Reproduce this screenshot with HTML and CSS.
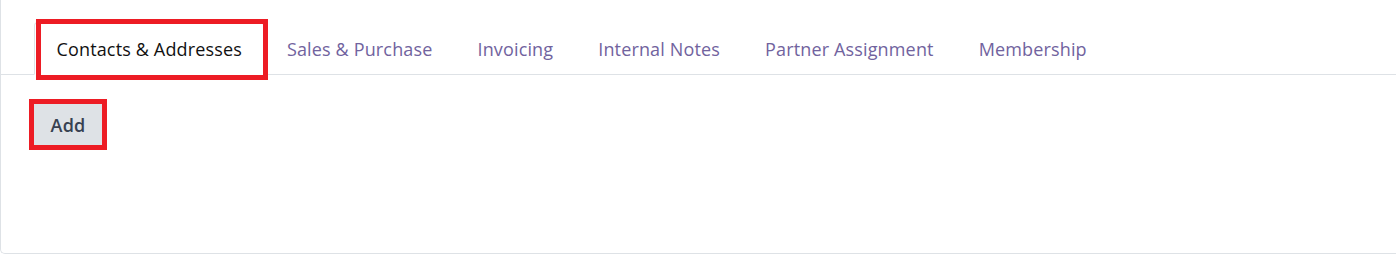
FILE: index.html
```html
<!DOCTYPE html>
<html lang="en">

<head>
	<meta charset="UTF-8">
	<title>Partner form - tabs</title>
	<link rel="stylesheet" href="styles.css">
</head>

<body>
	<div class="sheet">
		<ul class="nav-tabs">
			<li class="tab active">Contacts &amp; Addresses</li>
			<li class="tab">Sales &amp; Purchase</li>
			<li class="tab">Invoicing</li>
			<li class="tab">Internal Notes</li>
			<li class="tab">Partner Assignment</li>
			<li class="tab">Membership</li>
		</ul>
		<div class="tab-pane">
			<button class="btn">Add</button>
		</div>
		<!-- annotation boxes drawn over the screenshot -->
		<span class="mark mark-tab"></span>
		<span class="mark mark-add"></span>
	</div>
</body>

</html>
```

FILE: styles.css
```css
html, body {
	margin: 0;
	overflow: hidden;
	background: #fff;
}

body {
	font-family: "Open Sans", "Noto Sans", sans-serif;
	font-size: 18px;
	letter-spacing: 0.15px;
}

.sheet {
	position: relative;
	box-sizing: border-box;
	height: 254px;
	margin-right: -20px;
	border: 1px solid #dee2e6;
	border-top: none;
	border-right: none;
	border-radius: 0 0 0 5px;
}

.nav-tabs {
	display: flex;
	margin: 0;
	padding: 22px 0 0 33px;
	list-style: none;
	border-bottom: 1px solid #dee2e6;
}

.tab {
	box-sizing: border-box;
	height: 53px;
	margin-bottom: -1px;
	padding: 0 21.5px;
	border: 1px solid transparent;
	border-radius: 4px 4px 0 0;
	color: #71639e;
	line-height: 53px;
	white-space: nowrap;
}

.tab.active {
	color: #111;
	background: #fff;
	border-color: #dee2e6 #dee2e6 #fff;
}

.tab-pane {
	padding: 28px 0 0 32px;
}

.btn {
	width: 70px;
	height: 44px;
	padding: 0;
	border: none;
	border-radius: 3px;
	background: #dee2e6;
	color: #374151;
	font-family: inherit;
	font-size: 18px;
	font-weight: 600;
	letter-spacing: 0.15px;
}

.mark {
	position: absolute;
	box-sizing: border-box;
	border: 5px solid #ed1c24;
}

.mark-tab {
	left: 35px;
	top: 19px;
	width: 232px;
	height: 61px;
}

.mark-add {
	left: 28px;
	top: 99px;
	width: 78px;
	height: 51px;
}
```
